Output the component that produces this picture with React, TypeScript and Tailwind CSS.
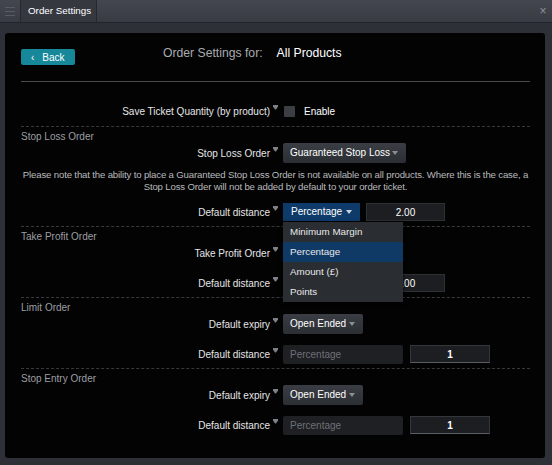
import React from "react";

function Marker() {
  return (
    <svg width="5" height="5" viewBox="0 0 5 5" className="ml-[3px] -mt-[7px] shrink-0">
      <path d="M0 0H5V1.5L3 4.5H2L0 1.5Z" fill="#7d8086" />
    </svg>
  );
}

function Caret({ color = "#8a8e95" }: { color?: string }) {
  return (
    <svg width="6" height="4" viewBox="0 0 6 4" className="shrink-0">
      <path d="M0 0H6L3 4Z" fill={color} />
    </svg>
  );
}

function Label({ text }: { text: string }) {
  return (
    <div className="w-[262px] pr-[5px] flex justify-end items-center text-[#e6e6e6] shrink-0">
      {text}
      <Marker />
    </div>
  );
}

function Select({ text, width }: { text: string; width: string }) {
  return (
    <div
      className={`${width} h-[20px] rounded-[2px] bg-gradient-to-b from-[#3a3e44] to-[#2b2e33] flex items-center justify-between pl-[7px] pr-[8px] text-white`}
    >
      <span className="-mt-[2px]">{text}</span>
      <Caret />
    </div>
  );
}

function SectionHeader({ text }: { text: string }) {
  return <div className="pt-[3px] leading-[13px] text-[#9c9ea2]">{text}</div>;
}

function DistanceRow() {
  return (
    <div className="flex items-center h-[20px] mt-[10px]">
      <Label text="Default distance" />
      <div className="w-[120px] h-[19px] rounded-[2px] bg-[#1e2024] text-[#6d7076] pl-[7px] flex items-center">
        Percentage
      </div>
      <div className="ml-[7px] w-[80px] h-[18px] bg-[#1c1e22] border border-[#33363b] border-b-[#5a5d63] flex items-center justify-center text-white font-bold">
        1
      </div>
    </div>
  );
}

export default function App() {
  return (
    <div className="w-[552px] h-[465px] overflow-hidden bg-[#2d3036] font-['Liberation_Sans',Arial,sans-serif] text-[10px]">
      {/* title bar */}
      <div className="h-[23px] flex bg-gradient-to-b from-[#44474f] to-[#383b42] border-b border-[#22242a]">
        <div className="w-[20px] flex flex-col justify-center items-center gap-[3px]">
          <div className="w-[10px] h-[1px] bg-[#585b62]" />
          <div className="w-[10px] h-[1px] bg-[#585b62]" />
          <div className="w-[10px] h-[1px] bg-[#585b62]" />
        </div>
        <div className="w-[77px] flex items-center pl-[7px] bg-[#35383f] border-l border-r border-[#26282d] text-white text-[9.8px]">
          Order Settings
        </div>
        <div className="flex-1" />
        <div className="w-[18px] flex items-center justify-center text-[#8d9097] text-[12px]">×</div>
      </div>

      {/* panel */}
      <div className="ml-[5px] mr-[7px] mt-[10px] h-[425px] rounded-[3px] bg-[#030304] pl-[16px] pr-[15px] pt-[16px]">
        <div className="flex items-start h-[16px]">
          <div className="w-[54px] h-[16px] rounded-[2px] bg-[#17879a] flex items-center text-white">
            <span className="pl-[10px] text-[10px]">‹</span>
            <span className="pl-[8px]">Back</span>
          </div>
          <div className="ml-[88px] -mt-[3px] leading-[14px] text-[12.2px] text-[#a9abaf]">Order Settings for:</div>
          <div className="ml-[14px] -mt-[3px] leading-[14px] text-[12.2px] text-white">All Products</div>
        </div>

        <div className="mt-[16px] border-t border-[#4a4b4f]" />

        <div className="flex items-center h-[20px] mt-[19px]">
          <Label text="Save Ticket Quantity (by product)" />
          <div className="ml-[1px] w-[11px] h-[11px] rounded-[1px] bg-[#3b3e43]" />
          <span className="ml-[9px] text-white">Enable</span>
        </div>

        {/* stop loss */}
        <div className="mt-[5px] border-t border-dashed border-[#38393c] pb-[4px]">
          <SectionHeader text="Stop Loss Order" />
          <div className="flex items-center h-[20px]">
            <Label text="Stop Loss Order" />
            <Select text="Guaranteed Stop Loss" width="w-[123px]" />
          </div>
          <div className="mt-[6px] leading-[12px] text-center text-[#b9babd] text-[9.6px] tracking-[-0.15px] whitespace-nowrap">
            Please note that the ability to place a Guaranteed Stop Loss Order is not available on all products. Where this is the case, a
            <br />
            Stop Loss Order will not be added by default to your order ticket.
          </div>
          <div className="flex items-center h-[20px] mt-[9px]">
            <Label text="Default distance" />
            <div className="relative">
              <div className="w-[77px] h-[18px] bg-[#0e3b69] flex items-center justify-between pl-[8px] pr-[8px] text-white">
                <span className="-mt-[2px]">Percentage</span>
                <Caret color="#c9d3de" />
              </div>
              <div className="absolute left-0 top-[19px] z-10 w-[120px] bg-[#2a2d32] shadow-[0_2px_4px_rgba(0,0,0,0.6)] text-[#e8e8e8] text-[9.8px]">
                <div className="h-[20px] flex items-center pl-[7px]">Minimum Margin</div>
                <div className="h-[20px] flex items-center pl-[7px] bg-[#0f3a66]">Percentage</div>
                <div className="h-[20px] flex items-center pl-[7px]">Amount (£)</div>
                <div className="h-[20px] flex items-center pl-[7px]">Points</div>
              </div>
            </div>
            <div className="ml-[6px] w-[79px] h-[18px] bg-[#1c1e22] border border-[#2e3035] flex items-center justify-center text-white">
              2.00
            </div>
          </div>
        </div>

        {/* take profit */}
        <div className="border-t border-dashed border-[#38393c] pb-[4px]">
          <SectionHeader text="Take Profit Order" />
          <div className="flex items-center h-[20px]">
            <Label text="Take Profit Order" />
            <div className="w-[80px] h-[20px] rounded-[2px] bg-[#2f3338]" />
          </div>
          <div className="flex items-center h-[20px] mt-[10px]">
            <Label text="Default distance" />
            <div className="w-[77px] h-[18px]" />
            <div className="ml-[6px] w-[79px] h-[18px] bg-[#1c1e22] border border-[#2e3035] flex items-center justify-center text-white">
              2.00
            </div>
          </div>
        </div>

        {/* limit */}
        <div className="border-t border-dashed border-[#38393c] pb-[4px]">
          <SectionHeader text="Limit Order" />
          <div className="flex items-center h-[20px]">
            <Label text="Default expiry" />
            <Select text="Open Ended" width="w-[80px]" />
          </div>
          <DistanceRow />
        </div>

        {/* stop entry */}
        <div className="border-t border-dashed border-[#38393c]">
          <SectionHeader text="Stop Entry Order" />
          <div className="flex items-center h-[20px]">
            <Label text="Default expiry" />
            <Select text="Open Ended" width="w-[80px]" />
          </div>
          <DistanceRow />
        </div>
      </div>
    </div>
  );
}
